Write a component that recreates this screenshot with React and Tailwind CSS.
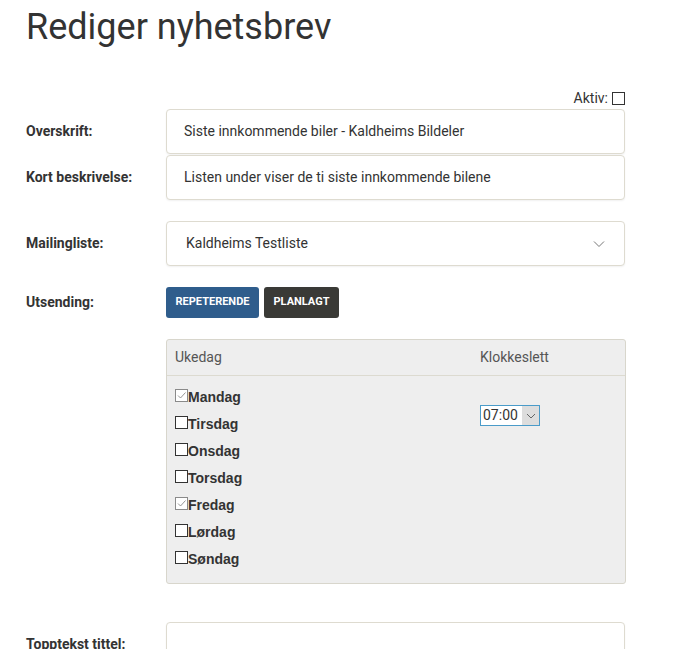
import { useState } from 'react'

const days = [
  { id: 'man', label: 'Mandag', checked: true },
  { id: 'tir', label: 'Tirsdag', checked: false },
  { id: 'ons', label: 'Onsdag', checked: false },
  { id: 'tor', label: 'Torsdag', checked: false },
  { id: 'fre', label: 'Fredag', checked: true },
  { id: 'lor', label: 'Lørdag', checked: false },
  { id: 'son', label: 'Søndag', checked: false },
]

function Box({ checked, className = '' }) {
  return (
    <span
      className={`inline-flex h-[13px] w-[13px] shrink-0 items-center justify-center border bg-white ${
        checked ? 'border-[#8a8a8a]' : 'border-[#333]'
      } ${className}`}
    >
      {checked && (
        <svg width="11" height="11" viewBox="0 0 11 11" fill="none">
          <path d="M2 5.5 L4.5 8 L9.5 2.5" stroke="#8a8a8a" strokeWidth="0.9" />
        </svg>
      )}
    </span>
  )
}

function Row({ label, children, className = '' }) {
  return (
    <div className={`flex items-center ${className}`}>
      <div className="w-[140px] shrink-0 text-[14px] font-bold text-[#333]">{label}</div>
      <div className="w-[459px]">{children}</div>
    </div>
  )
}

function TextBox({ value }) {
  return (
    <div className="flex h-[45px] items-center rounded-[4px] border border-[#dedbd0] bg-white px-[17px] text-[14px] text-[#333] shadow-[0_1px_2px_rgba(0,0,0,0.06)]">
      {value}
    </div>
  )
}

export default function App() {
  const [mode, setMode] = useState('repeat')

  return (
    <div className="min-h-[649px] bg-white pl-[26px] font-['Roboto',sans-serif] text-[#333]">
      {/* tittel */}
      <h1 className="pt-[6px] text-[36px] leading-[42px] text-[#333]">Rediger nyhetsbrev</h1>

      <div className="mt-[42px] flex w-[599px] items-center justify-end gap-[4px] text-[14px] leading-[16px]">
        <span>Aktiv:</span>
        <Box checked={false} className="h-[12px] w-[12px]" />
      </div>

      <Row label="Overskrift:" className="mt-[3px]">
        <TextBox value="Siste innkommende biler - Kaldheims Bildeler" />
      </Row>
      <Row label="Kort beskrivelse:" className="mt-[1px]">
        <TextBox value="Listen under viser de ti siste innkommende bilene" />
      </Row>

      <Row label="Mailingliste:" className="mt-[21px]">
        <div className="flex h-[45px] items-center justify-between rounded-[4px] border border-[#dedbd0] bg-white pl-[19px] pr-[19px] text-[14px] shadow-[0_1px_2px_rgba(0,0,0,0.06)]">
          <span>Kaldheims Testliste</span>
          <svg width="12" height="8" viewBox="0 0 12 8" fill="none">
            <path d="M1 1.5 L6 6.5 L11 1.5" stroke="#777" strokeWidth="1" />
          </svg>
        </div>
      </Row>

      <Row label="Utsending:" className="mt-[21px]">
        <div className="flex gap-[5px]">
          <button
            onClick={() => setMode('repeat')}
            className="h-[31px] w-[93px] rounded-[3px] bg-[#2f5d8c] text-[11px] font-bold text-white"
          >
            REPETERENDE
          </button>
          <button
            onClick={() => setMode('planned')}
            className="h-[31px] w-[75px] rounded-[3px] bg-[#3a3a36] text-[11px] font-bold text-white"
          >
            PLANLAGT
          </button>
        </div>
      </Row>

      {/* ukedager */}
      {mode === 'repeat' && (
        <div className="ml-[140px] mt-[21px] w-[460px] rounded-[3px] border border-[#d8d6cc] bg-[#eeeeee] pb-[10px]">
          <div className="flex h-[36px] items-center border-b border-[#dcdad0] px-[8px] text-[14px] text-[#555]">
            <span className="w-[305px]">Ukedag</span>
            <span>Klokkeslett</span>
          </div>
          <div className="flex px-[8px] pt-[8px]">
            <div className="w-[305px]">
              {days.map((d) => (
                <div key={d.id} className="flex h-[27px] items-center">
                  <Box checked={d.checked} className="-mt-[4px]" />
                  <span className="font-['Liberation_Sans',Arial,sans-serif] text-[14px] font-bold text-[#333]">
                    {d.label}
                  </span>
                </div>
              ))}
            </div>
            <div className="pt-[21px]">
              <div className="flex h-[21px] w-[60px] items-center border border-[#4a9bc9] bg-white text-[14px] text-[#333]">
                <span className="flex-1 pl-[2px]">07:00</span>
                <span className="flex h-full w-[17px] items-center justify-center bg-[#dddddd]">
                  <svg width="10" height="6" viewBox="0 0 10 6" fill="none">
                    <path d="M1 1 L5 5 L9 1" stroke="#666" strokeWidth="1" />
                  </svg>
                </span>
              </div>
            </div>
          </div>
        </div>
      )}

      <Row label="Topptekst tittel:" className="mt-[38px]">
        <div className="h-[45px] rounded-[4px] border border-[#dedbd0] bg-white shadow-[0_1px_2px_rgba(0,0,0,0.06)]" />
      </Row>
    </div>
  )
}
